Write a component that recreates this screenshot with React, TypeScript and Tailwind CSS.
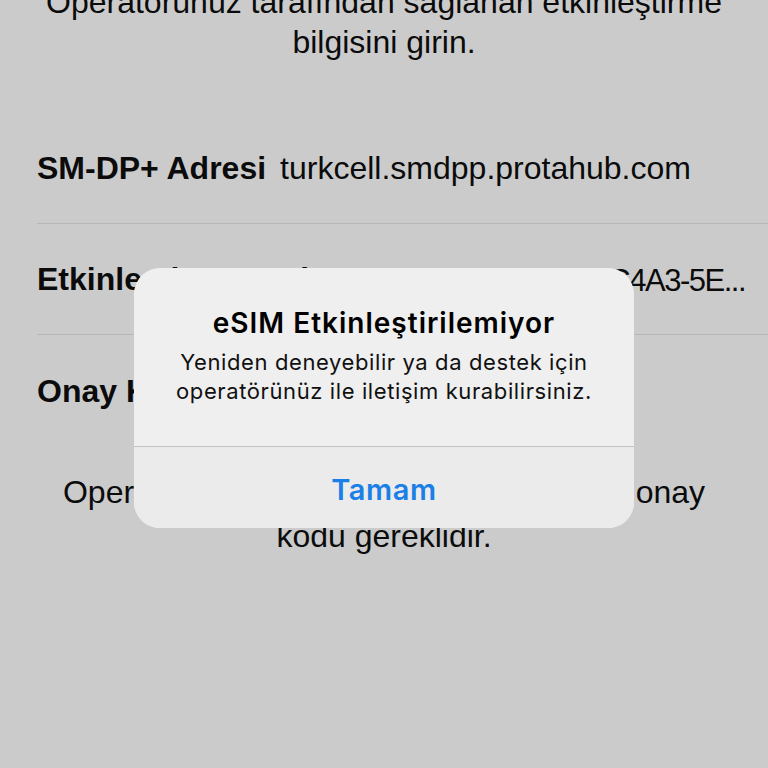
import React from "react";

const sans = { fontFamily: '"Liberation Sans", Arial, sans-serif' };
const alertFont = { fontFamily: 'Inter, "Liberation Sans", Arial, sans-serif' };

function Row({ label, value, last }: { label: string; value?: string; last?: boolean }) {
  return (
    <div className="pl-[37px]">
      <div
        className={`h-[111px] flex items-center justify-between pr-[23px] ${
          last ? "" : "border-b border-[#b7b7b7]"
        }`}
      >
        <span className="font-bold text-[32px] text-[#0b0b0b] whitespace-nowrap">{label}</span>
        {value ? (
          <span className="text-[31px] text-[#0b0b0b] whitespace-nowrap ml-4 mt-[4px] tracking-[-1.5px]">
            {value}
          </span>
        ) : null}
      </div>
    </div>
  );
}

export default function App() {
  return (
    <div className="relative w-[768px] h-[768px] overflow-hidden bg-[#cbcbcb]" style={sans}>
      <div className="flex flex-col">
        <p className="mt-[-18px] text-center text-[32px] leading-[40px] text-[#0b0b0b]">
          Operatörünüz tarafından sağlanan etkinleştirme
          <br />
          bilgisini girin.
        </p>
        <div className="mt-[51px]">
          <div className="pl-[37px]">
            <div className="h-[111px] flex items-center border-b border-[#b7b7b7]">
              <span className="font-bold text-[32px] text-[#0b0b0b] whitespace-nowrap">SM-DP+ Adresi</span>
              <span className="text-[32px] text-[#0b0b0b] whitespace-nowrap ml-[14px]">
                turkcell.smdpp.protahub.com
              </span>
            </div>
          </div>
          <Row label="Etkinleştirme Kodu" value="1$K2C4A3-5E..." />
          <Row label="Onay Kodu" last />
        </div>
        <p className="mt-[24px] text-center text-[32px] leading-[44px] text-[#0b0b0b]">
          Operatörünüz tarafından gerektiriliyorsa onay
          <br />
          kodu gereklidir.
        </p>
      </div>

      {/* alert */}
      <div
        className="absolute left-[134px] top-[268px] w-[500px] rounded-[26px] overflow-hidden bg-[#efefef]"
        style={alertFont}
      >
        <div className="h-[178px] flex flex-col items-center pt-[39px]">
          <div className="text-[28px] font-semibold text-black leading-[32px] tracking-[1px]">
            eSIM Etkinleştirilemiyor
          </div>
          <div className="mt-[9px] text-[22px] text-[#111] leading-[29px] text-center tracking-[0.6px]">
            Yeniden deneyebilir ya da destek için
            <br />
            operatörünüz ile iletişim kurabilirsiniz.
          </div>
        </div>
        <div className="h-[82px] border-t border-[#c3c3c3] bg-[#ebebeb] flex items-center justify-center">
          <span className="text-[29px] font-semibold text-[#1a7fe6] tracking-[0.6px] mt-[4px]">Tamam</span>
        </div>
      </div>
    </div>
  );
}
